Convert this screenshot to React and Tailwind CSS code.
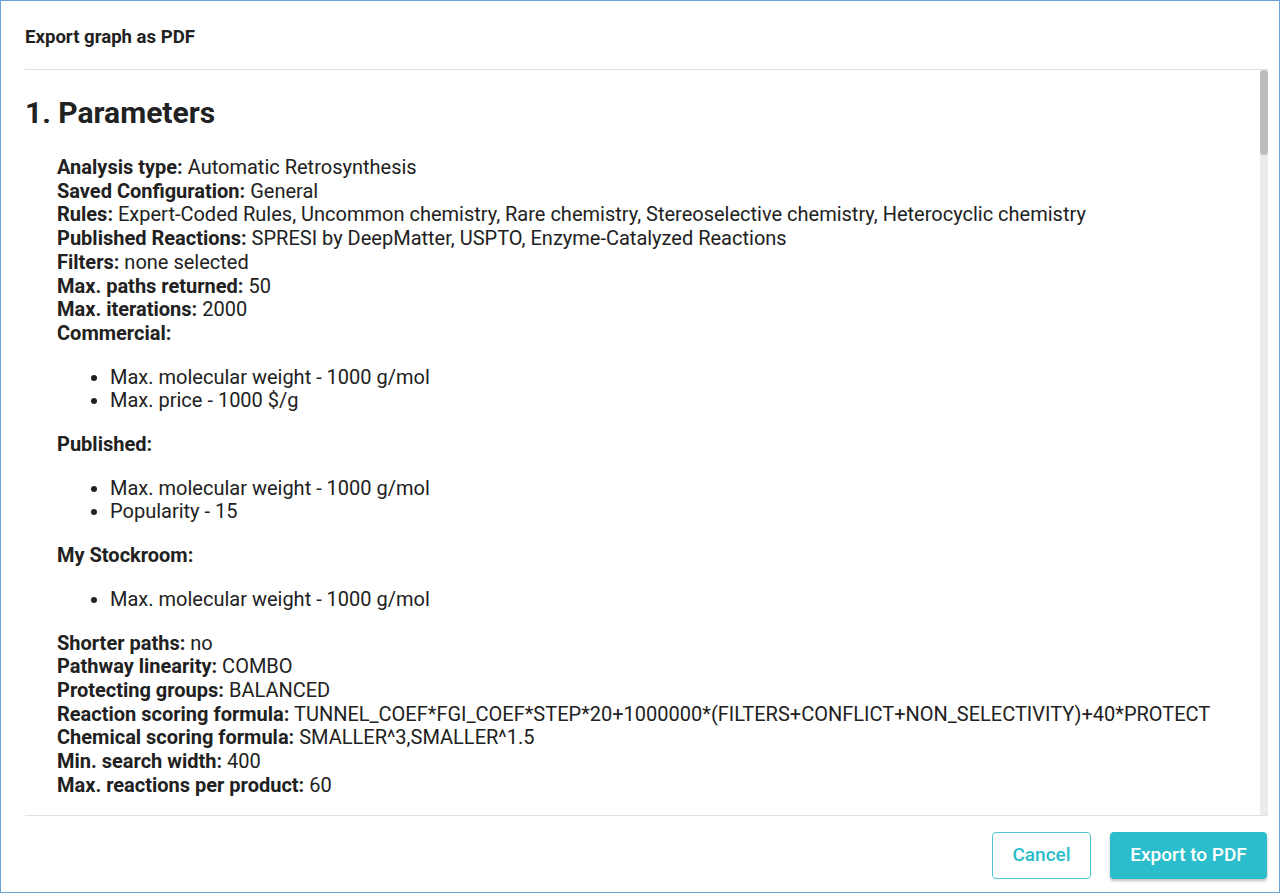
import React from "react";

const params = [
  ["Analysis type:", "Automatic Retrosynthesis"],
  ["Saved Configuration:", "General"],
  [
    "Rules:",
    "Expert-Coded Rules, Uncommon chemistry, Rare chemistry, Stereoselective chemistry, Heterocyclic chemistry",
  ],
  ["Published Reactions:", "SPRESI by DeepMatter, USPTO, Enzyme-Catalyzed Reactions"],
  ["Filters:", "none selected"],
  ["Max. paths returned:", "50"],
  ["Max. iterations:", "2000"],
];

const stock = [
  ["Commercial:", ["Max. molecular weight - 1000 g/mol", "Max. price - 1000 $/g"]],
  ["Published:", ["Max. molecular weight - 1000 g/mol", "Popularity - 15"]],
  ["My Stockroom:", ["Max. molecular weight - 1000 g/mol"]],
];

const more = [
  ["Shorter paths:", "no"],
  ["Pathway linearity:", "COMBO"],
  ["Protecting groups:", "BALANCED"],
  [
    "Reaction scoring formula:",
    "TUNNEL_COEF*FGI_COEF*STEP*20+1000000*(FILTERS+CONFLICT+NON_SELECTIVITY)+40*PROTECT",
  ],
  ["Chemical scoring formula:", "SMALLER^3,SMALLER^1.5"],
  ["Min. search width:", "400"],
  ["Max. reactions per product:", "60"],
];

function Row({ label, value }) {
  return (
    <div className="whitespace-nowrap">
      <span className="font-bold">{label}</span> {value}
    </div>
  );
}

export default function App() {
  return (
    <div
      className="h-[893px] w-full bg-white border border-[#6aa3d6] flex flex-col text-[#212121] overflow-hidden"
      style={{ fontFamily: "Roboto, 'Liberation Sans', sans-serif" }}
    >
      <div className="h-[68px] flex items-center pl-6 pt-[6px] shrink-0">
        <h2 className="text-[18.6px] font-bold">Export graph as PDF</h2>
      </div>

      <div className="flex-1 min-h-0 flex ml-6 mr-[11px] border-t border-b border-[#e0e0e0]">
        <div className="flex-1 min-w-0 overflow-hidden">
          <h1 className="text-[30px] font-bold leading-[36px] mt-[25px]">1. Parameters</h1>
          <div className="pl-8 mt-[25px] text-[20px] leading-[23.7px]">
            {params.map(([l, v]) => (
              <Row key={l} label={l} value={v} />
            ))}
            {stock.map(([l, items]) => (
              <div key={l}>
                <div className="font-bold">{l}</div>
                <ul className="list-disc pl-[53px] my-5">
                  {items.map((it) => (
                    <li key={it}>{it}</li>
                  ))}
                </ul>
              </div>
            ))}
            {more.map(([l, v]) => (
              <Row key={l} label={l} value={v} />
            ))}
          </div>
        </div>
        <div className="w-[8px] bg-[#ebebeb] shrink-0 flex flex-col">
          <div className="h-[85px] bg-[#bdbdbd] rounded-full" />
        </div>
      </div>

      <div className="h-[76px] shrink-0 flex items-center justify-end gap-[19px] pr-[12px] pt-[3px]">
        <button className="h-[47px] w-[99px] rounded-[4px] border border-[#4fc6d3] text-[#2bbccb] text-[19px] font-medium">
          Cancel
        </button>
        <button className="h-[47px] w-[157px] rounded-[4px] bg-[#2cbdcc] text-white text-[19px] font-medium shadow-[0_2px_3px_rgba(0,0,0,0.25)]">
          Export to PDF
        </button>
      </div>
    </div>
  );
}
